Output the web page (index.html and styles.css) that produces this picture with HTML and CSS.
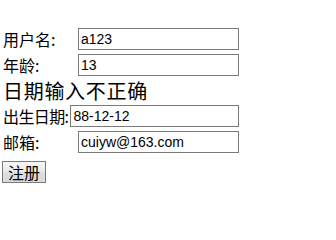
FILE: index.html
```html
<!DOCTYPE html>
<html>
<head>
<meta charset="utf-8">
<link rel="stylesheet" href="styles.css">
</head>
<body>
<form class="form">
  <div class="row">
    <span class="label">用户名:</span>
    <input class="field" type="text" value="a123">
  </div>
  <div class="row row-gap">
    <span class="label">年龄:</span>
    <input class="field" type="text" value="13">
  </div>
  <div class="message">日期输入不正确</div>
  <div class="row">
    <span class="label label-auto">出生日期:</span>
    <input class="field" type="text" value="88-12-12">
  </div>
  <div class="row row-gap">
    <span class="label">邮箱:</span>
    <input class="field" type="text" value="cuiyw@163.com">
  </div>
  <div class="actions">
    <button class="submit" type="button">注册</button>
  </div>
</form>
</body>
</html>
```

FILE: styles.css
```css
html, body {
  margin: 0;
  background: #ffffff;
}
body {
  padding: 0 0 0 2px;
  font-family: "Noto Sans CJK SC", "Noto Sans", sans-serif;
  color: #000000;
}
.form {
  display: flex;
  flex-direction: column;
  padding-top: 28px;
}
.row {
  display: flex;
  align-items: center;
  width: 237px;
  height: 22px;
}
.row-gap {
  margin-top: 4px;
}
.label {
  flex: none;
  width: 76px;
  padding-left: 1px;
  box-sizing: border-box;
  font-size: 16px;
  line-height: 22px;
  white-space: nowrap;
}
.label-auto {
  width: auto;
  margin-right: 2px;
  letter-spacing: -0.6px;
}
.field {
  flex: 1;
  min-width: 0;
  height: 22px;
  box-sizing: border-box;
  margin: 0;
  border: 1px solid #7a7a7a;
  padding: 0 2px;
  font-family: "Liberation Sans", Arial, sans-serif;
  font-size: 14px;
  color: #000000;
  background: #ffffff;
  outline: none;
}
.message {
  padding-left: 1px;
  font-size: 20px;
  letter-spacing: 0.7px;
  line-height: 29px;
  height: 29px;
  overflow: hidden;
}
.actions {
  display: flex;
  margin-top: 8px;
}
.submit {
  width: 44px;
  height: 22px;
  margin: 0;
  padding: 0;
  border: 1px solid #7a7a7a;
  background: linear-gradient(#f6f6f6, #e9e9e9 50%, #dfdfdf 51%, #dadada);
  font-family: "Noto Sans CJK SC", sans-serif;
  font-size: 16px;
  line-height: 20px;
  color: #000000;
}
```
